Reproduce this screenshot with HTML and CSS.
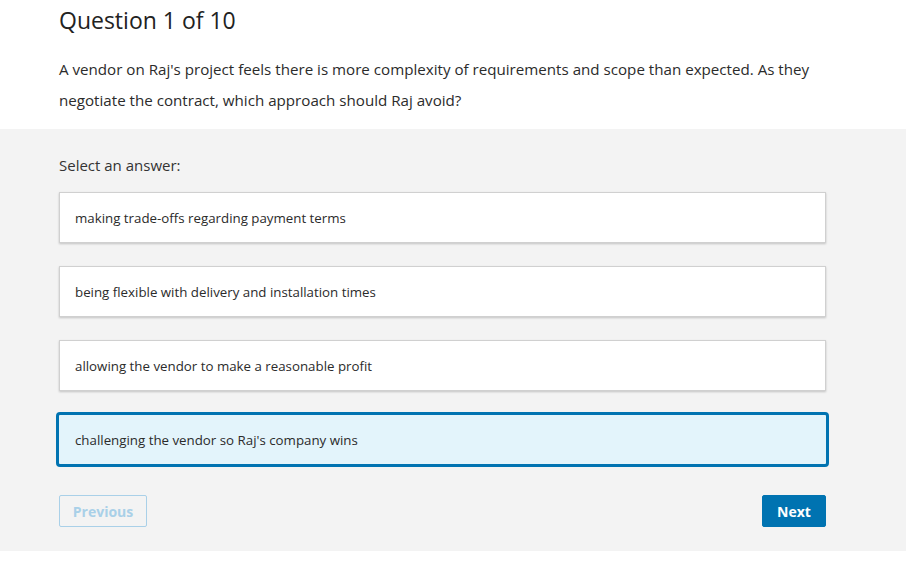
FILE: index.html
```html
<!DOCTYPE html>
<html lang="en">
<head>
    <meta charset="UTF-8">
    <title>Quiz</title>
    <link rel="stylesheet" href="styles.css">
</head>
<body>
    <div class="question-head">
        <h1>Question 1 of 10</h1>
        <p class="prompt">A vendor on Raj's project feels there is more complexity of requirements and scope than expected. As they negotiate the contract, which approach should Raj avoid?</p>
    </div>

    <div class="answers">
        <div class="answers-label">Select an answer:</div>
        <ul class="options">
            <li class="option">making trade-offs regarding payment terms</li>
            <li class="option">being flexible with delivery and installation times</li>
            <li class="option">allowing the vendor to make a reasonable profit</li>
            <li class="option selected">challenging the vendor so Raj's company wins</li>
        </ul>
        <div class="nav">
            <button class="btn btn-prev" disabled>Previous</button>
            <button class="btn btn-next">Next</button>
        </div>
    </div>
</body>
</html>
```

FILE: styles.css
```css
body {
    margin: 0;
    font-family: "Open Sans", "Noto Sans", sans-serif;
    color: #222;
    background-color: #fff;
}

.question-head {
    padding: 4px 59px 0;
    height: 125px;
}

h1 {
    margin: 0;
    font-size: 23px;
    font-weight: 400;
    line-height: 32px;
}

.prompt {
    margin: 18px 0 0;
    width: 780px;
    font-size: 15.15px;
    line-height: 31px;
    color: #2b2b2b;
}

.answers {
    background-color: #f3f3f3;
    padding: 25px 59px 24px;
}

.answers-label {
    font-size: 15px;
    line-height: 22px;
    color: #333;
}

.options {
    list-style: none;
    margin: 16px 0 0;
    padding: 0;
    width: 767px;
}

.option {
    box-sizing: border-box;
    height: 51px;
    margin-bottom: 23px;
    padding: 0 15px;
    display: flex;
    align-items: center;
    background-color: #fff;
    border: 1px solid #d0d0d0;
    box-shadow: 0 1px 2px rgba(0, 0, 0, 0.2);
    font-size: 13.3px;
    color: #2b2b2b;
}

.option.selected {
    height: 55px;
    margin: -2px -3px 0;
    width: 773px;
    padding-left: 16px;
    background-color: #e3f4fb;
    border: 3px solid #0073b1;
    border-radius: 4px;
    box-shadow: none;
}

.nav {
    display: flex;
    justify-content: space-between;
    margin-top: 28px;
    width: 767px;
}

.btn {
    height: 32px;
    padding: 0;
    font-family: inherit;
    font-size: 14px;
    font-weight: 700;
    border-radius: 2px;
}

.btn-prev {
    width: 88px;
    background-color: transparent;
    border: 1px solid #a9d0e8;
    color: #a9d0e8;
}

.btn-next {
    width: 64px;
    background-color: #0073b1;
    border: 1px solid #0073b1;
    color: #fff;
}
```
